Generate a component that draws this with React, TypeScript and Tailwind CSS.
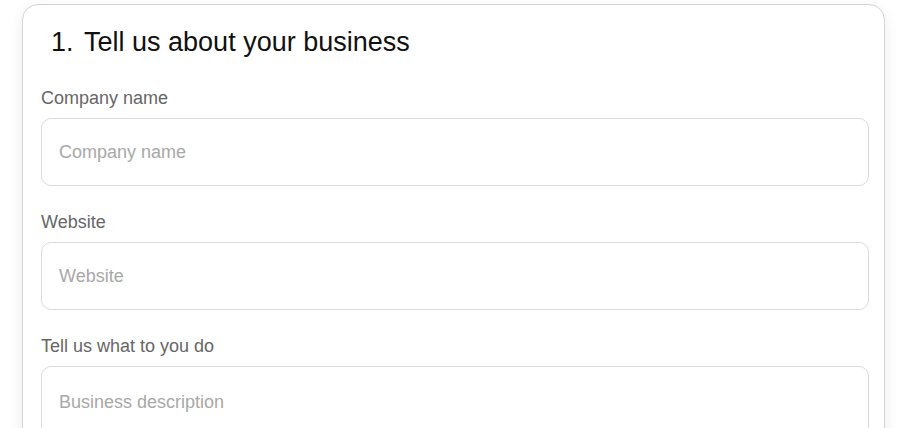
export default function App() {
  const fields = [
    { label: 'Company name', placeholder: 'Company name' },
    { label: 'Website', placeholder: 'Website' },
  ];

  return (
    <div
      className="h-[428px] w-[908px] overflow-hidden bg-white pt-[4px] pl-[22px]"
      style={{ fontFamily: '"Liberation Sans", Arial, sans-serif' }}
    >
      <div className="w-[863px] h-[500px] rounded-[16px] border border-[#d4d4d4] bg-white pl-[18px] pr-[15px] shadow-[0_4px_14px_rgba(0,0,0,0.08)]">
        {/* Title */}
        <h2 className="pl-[10px] pt-[22px] text-[27px] leading-[30px] text-[#111]">
          1. <span className="ml-[3px]">Tell us about your business</span>
        </h2>

        <div className="mt-[29px] flex flex-col">
          {fields.map((f) => (
            <div key={f.label} className="mb-[24px]">
              <label className="block text-[18px] leading-[24px] text-[#666]">{f.label}</label>
              <input
                placeholder={f.placeholder}
                className="mt-[8px] block h-[68px] w-full rounded-[10px] border border-[#dadada] px-[17px] text-[18px] text-[#333] outline-none placeholder:text-[#a8a8a8]"
              />
            </div>
          ))}
          <div>
            <label className="block text-[18px] leading-[24px] text-[#666]">Tell us what to you do</label>
            <textarea
              placeholder="Business description"
              className="mt-[8px] block h-[120px] w-full resize-none rounded-[10px] border border-[#dadada] px-[17px] pt-[24px] text-[18px] leading-[22px] text-[#333] outline-none placeholder:text-[#a8a8a8]"
            />
          </div>
        </div>
      </div>
    </div>
  );
}
